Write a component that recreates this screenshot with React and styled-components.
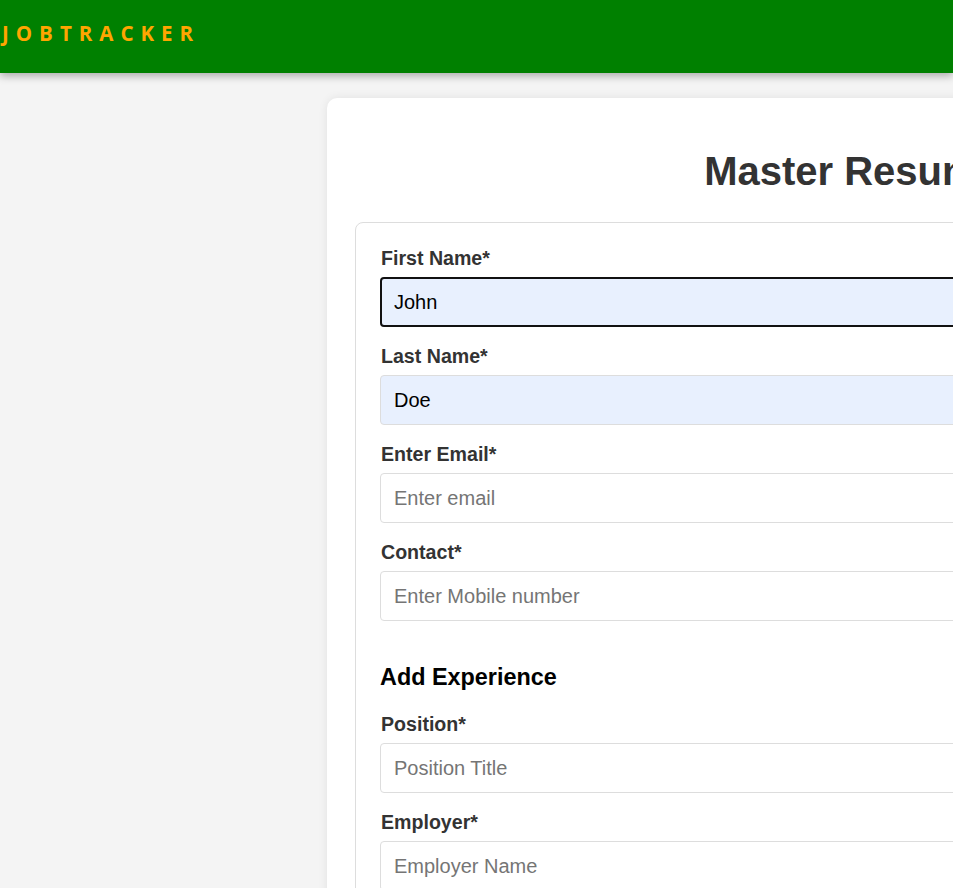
import React from "react";
import styled, { createGlobalStyle } from "styled-components";

const Global = createGlobalStyle`
  html, body { margin: 0; padding: 0; background: #f4f4f4; overflow: hidden; }
  body { font-family: "Liberation Sans", Arial, sans-serif; }
  * { box-sizing: border-box; }
`;

const Header = styled.header`
  height: 73px;
  background: #008000;
  display: flex;
  align-items: center;
  padding: 0 0 7px 2px;
  box-shadow: 0 3px 8px rgba(0, 0, 0, 0.3);
  position: relative;
  z-index: 1;
`;

const Logo = styled.div`
  font-family: "Open Sans", "Noto Sans", sans-serif;
  font-weight: 700;
  font-size: 20.5px;
  letter-spacing: 7px;
  color: #ffa500;
`;

const Main = styled.main`
  width: 1704px;
  display: flex;
  justify-content: center;
  padding-top: 25px;
`;

const Card = styled.section`
  width: 1050px;
  background: #fff;
  border-radius: 10px;
  box-shadow: 0 0 10px rgba(0, 0, 0, 0.08);
  padding: 28px;
  min-height: 900px;
`;

const Title = styled.h1`
  margin: 23px 0 28px;
  text-align: center;
  font-size: 40px;
  font-weight: 700;
  color: #333;
`;

const FormBox = styled.form`
  border: 1px solid #ddd;
  border-radius: 8px;
  padding: 24px 24px;
  display: flex;
  flex-direction: column;
  gap: 18px;
`;

const Field = styled.div`
  display: flex;
  flex-direction: column;
  gap: 8px;
`;

const Label = styled.label`
  font-size: 19.6px;
  font-weight: 700;
  color: #333;
  line-height: 22px;
  padding-left: 1px;
`;

const Input = styled.input`
  height: 50px;
  width: 100%;
  border-radius: 4px;
  font-family: "Liberation Sans", Arial, sans-serif;
  font-size: 20px;
  color: #000;
  outline: none;
  background: ${(p) => (p.$filled ? "#e8f0fe" : "#fff")};
  border: ${(p) => (p.$focused ? "2px solid #111" : "1px solid #ddd")};
  padding: ${(p) => (p.$focused ? "0 12px" : "0 13px")};
  &::placeholder { color: #757575; }
`;

const SectionTitle = styled.h3`
  margin: 25px 0 4px;
  font-size: 23.4px;
  font-weight: 700;
  color: #000;
`;

const fields = [
  { label: "First Name*", value: "John", filled: true, focused: true },
  { label: "Last Name*", value: "Doe", filled: true },
  { label: "Enter Email*", placeholder: "Enter email" },
  { label: "Contact*", placeholder: "Enter Mobile number" },
];

const expFields = [
  { label: "Position*", placeholder: "Position Title" },
  { label: "Employer*", placeholder: "Employer Name" },
];

function FormField({ f }) {
  return (
    <Field>
      <Label>{f.label}</Label>
      <Input
        defaultValue={f.value}
        placeholder={f.placeholder}
        $filled={f.filled}
        $focused={f.focused}
      />
    </Field>
  );
}

export default function App() {
  return (
    <>
      <Global />
      <Header>
        <Logo>JOBTRACKER</Logo>
      </Header>
      <Main>
        <Card>
          <Title>Master Resume</Title>
          <FormBox onSubmit={(e) => e.preventDefault()}>
            {fields.map((f) => (
              <FormField key={f.label} f={f} />
            ))}
            <SectionTitle>Add Experience</SectionTitle>
            {expFields.map((f) => (
              <FormField key={f.label} f={f} />
            ))}
          </FormBox>
        </Card>
      </Main>
    </>
  );
}
